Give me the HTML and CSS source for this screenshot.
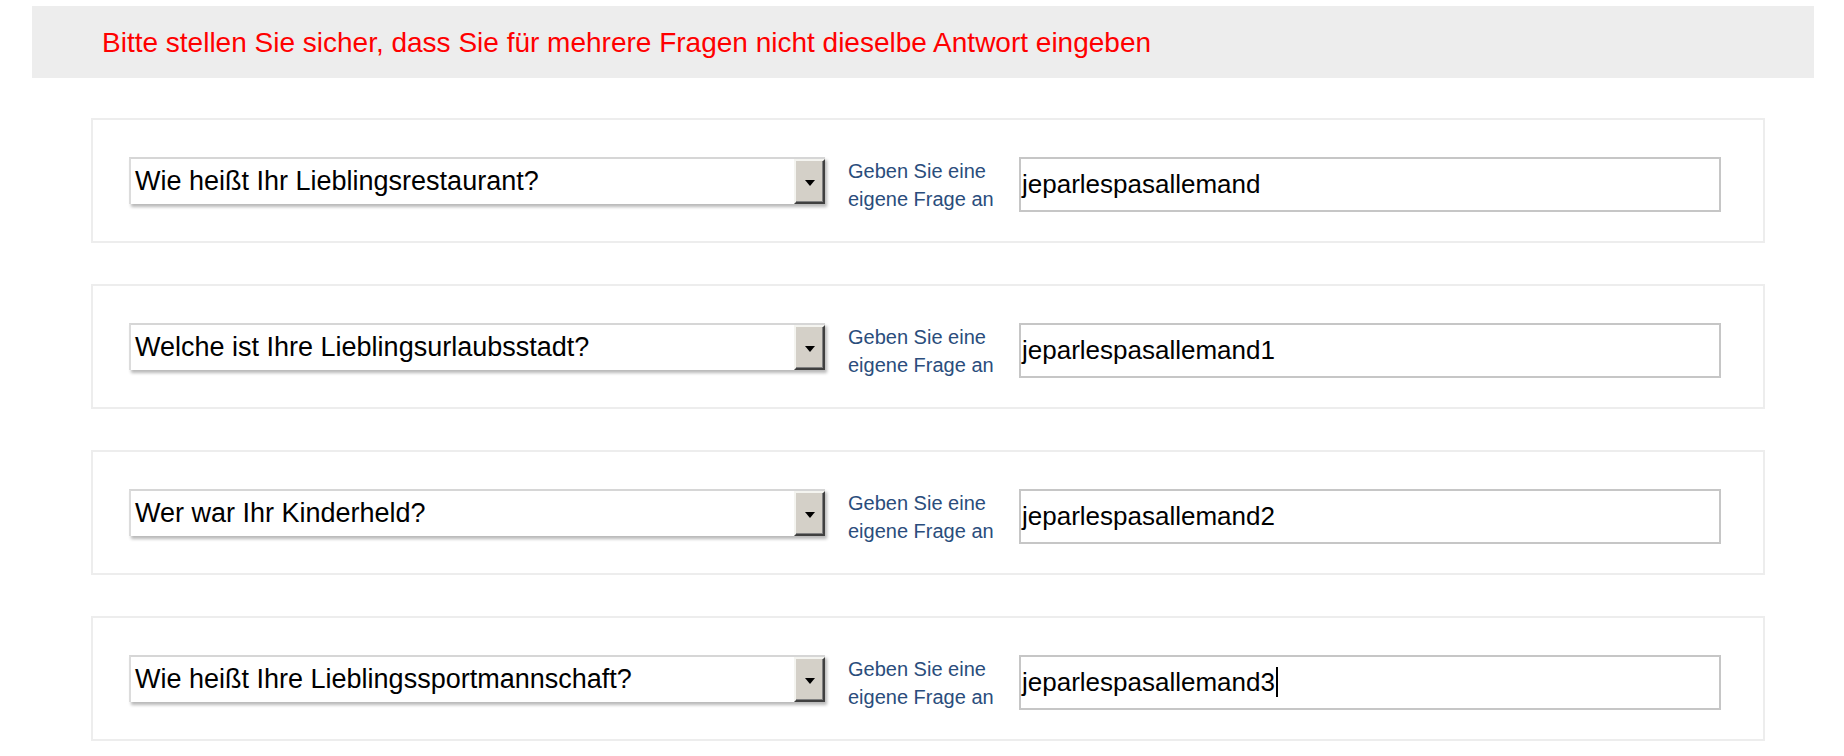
FILE: index.html
```html
<!DOCTYPE html>
<html lang="de">
<head>
<meta charset="utf-8">
<title>Sicherheitsfragen</title>
<link rel="stylesheet" href="styles.css">
</head>
<body>
<div class="banner">
  <p class="banner-text">Bitte stellen Sie sicher, dass Sie für mehrere Fragen nicht dieselbe Antwort eingeben</p>
</div>
<div class="list">
  <div class="card">
    <div class="select"><span class="select-text">Wie heißt Ihr Lieblingsrestaurant?</span><span class="select-btn"><span class="arrow"></span></span></div>
    <div class="label">Geben Sie eine<br>eigene Frage an</div>
    <div class="input">jeparlespasallemand</div>
  </div>
  <div class="card">
    <div class="select"><span class="select-text">Welche ist Ihre Lieblingsurlaubsstadt?</span><span class="select-btn"><span class="arrow"></span></span></div>
    <div class="label">Geben Sie eine<br>eigene Frage an</div>
    <div class="input">jeparlespasallemand1</div>
  </div>
  <div class="card">
    <div class="select"><span class="select-text">Wer war Ihr Kinderheld?</span><span class="select-btn"><span class="arrow"></span></span></div>
    <div class="label">Geben Sie eine<br>eigene Frage an</div>
    <div class="input">jeparlespasallemand2</div>
  </div>
  <div class="card">
    <div class="select"><span class="select-text">Wie heißt Ihre Lieblingssportmannschaft?</span><span class="select-btn"><span class="arrow"></span></span></div>
    <div class="label">Geben Sie eine<br>eigene Frage an</div>
    <div class="input"><span class="caret">jeparlespasallemand3</span></div>
  </div>
</div>
</body>
</html>
```
FILE: styles.css
```css
html, body {
  margin: 0;
  padding: 0;
  background: #ffffff;
}
body {
  font-family: "Liberation Sans", Arial, sans-serif;
  color: #000;
}
.banner {
  margin: 6px 0 0 32px;
  width: 1782px;
  height: 72px;
  background: #ededed;
  display: flex;
  align-items: center;
}
.banner-text {
  margin: 0 0 0 70px;
  font-size: 28px;
  color: #ff0000;
  line-height: 32px;
  padding-top: 2px;
}
.list {
  margin: 40px 0 0 91px;
  width: 1674px;
  display: flex;
  flex-direction: column;
  gap: 41px;
}
.card {
  box-sizing: border-box;
  height: 125px;
  border: 2px solid #ededed;
  display: flex;
  align-items: flex-start;
  padding: 37px 0 0 36px;
}
.select {
  box-sizing: border-box;
  width: 696px;
  height: 47px;
  display: flex;
  border-top: 2px solid #d6d6d6;
  border-left: 2px solid #dcdcdc;
  box-shadow: 2px 3px 3px rgba(0, 0, 0, 0.28);
  background: #fff;
}
.select-text {
  flex: 1;
  font-size: 27px;
  line-height: 44px;
  padding-left: 4px;
  white-space: nowrap;
  overflow: hidden;
}
.select-btn {
  box-sizing: border-box;
  width: 31px;
  height: 45px;
  background: #d4d0c8;
  border-top: 2px solid #f4f4f0;
  border-left: 2px solid #f4f4f0;
  border-right: 2px solid #404040;
  border-bottom: 2px solid #404040;
  box-shadow: inset -1px -1px 0 #808080;
  display: flex;
  align-items: center;
  justify-content: center;
}
.arrow {
  width: 0;
  height: 0;
  border-left: 5px solid transparent;
  border-right: 5px solid transparent;
  border-top: 6px solid #000;
  margin-top: 2px;
}
.label {
  margin-left: 23px;
  width: 171px;
  font-size: 20px;
  line-height: 28px;
  color: #2a4d7c;
  margin-top: 0;
}
.input {
  box-sizing: border-box;
  width: 702px;
  height: 55px;
  border: 2px solid #c6c6c6;
  font-size: 26px;
  line-height: 50px;
  padding-left: 1px;
  white-space: nowrap;
}
.caret {
  border-right: 2px solid #000;
  padding-right: 1px;
}
```
